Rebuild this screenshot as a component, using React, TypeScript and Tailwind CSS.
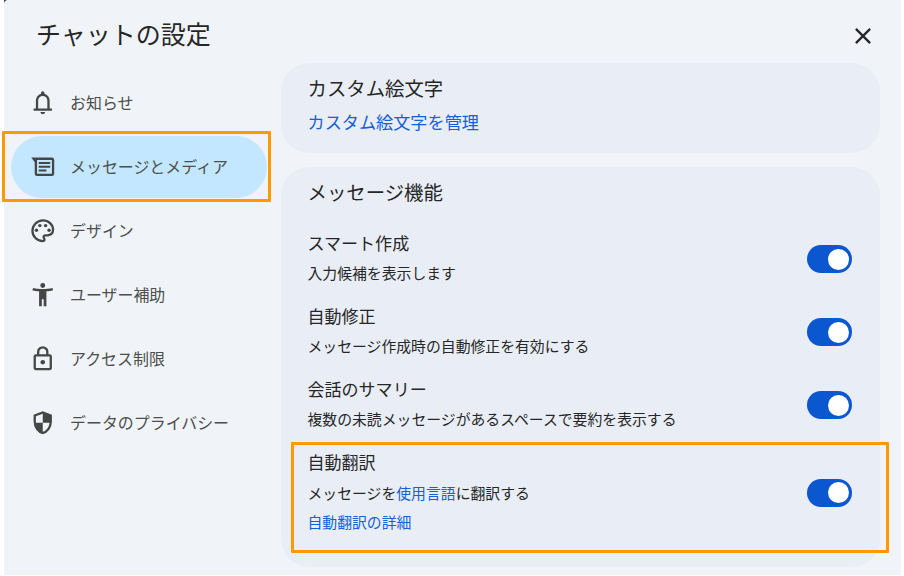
import type { ReactNode } from 'react';

const icons: Record<string, ReactNode> = {
  bell: (
    <path d="M4 19v-2h2v-7q0-2.075 1.25-3.687T10.5 4.2v-.7q0-.625.438-1.062T12 2t1.063.438T13.5 3.5v.7q2 .5 3.25 2.113T18 10v7h2v2H4Zm8 3q-.825 0-1.413-.588T10 20h4q0 .825-.588 1.413T12 22Zm-4-5h8v-7q0-1.65-1.175-2.825T12 6 9.175 7.175 8 10v7Z" />
  ),
  message: (
    <path
      fillRule="evenodd"
      d="M2 4h18a2 2 0 0 1 2 2v12a2 2 0 0 1-2 2H7a2 2 0 0 1-2-2V8L2 4Zm5 2v12h13V6H7Zm1.5 1.8h10v1.7h-10V7.8Zm0 3.3h10v1.7h-10v-1.7Zm0 3.3h6.7v1.7H8.500v-1.7Z"
    />
  ),
  palette: (
    <>
      <path d="M12 22q-2.050 0-3.875-.788t-3.187-2.150-2.150-3.187T2 12q0-2.075.813-3.900t2.200-3.175T8.250 2.788 12.200 2q2 0 3.775.688t3.113 1.900 2.125 2.875T22 11.050q0 2.875-1.750 4.413T16 17h-1.850q-.225 0-.312.125t-.088.275q0 .3.375.863t.375 1.287q0 1.250-.687 1.850T12 22Zm0-2q.15 0 .325-.125T12.500 19.550q0-.35-.375-.825T11.750 17.300q0-1.050.725-1.675T14.250 15H16q1.650 0 2.825-.962T20 11.050q0-3.025-2.312-5.037T12.200 4Q8.800 4 6.400 6.325T4 12q0 3.325 2.338 5.663T12 20Z" />
      <circle cx="6.5" cy="11.500" r="1.5" />
      <circle cx="9.5" cy="7.500" r="1.5" />
      <circle cx="14.5" cy="7.500" r="1.5" />
      <circle cx="17.5" cy="11.500" r="1.5" />
    </>
  ),
  person: (
    <path d="M12 6.100a2.150 2.150 0 1 0 0-4.300 2.150 2.150 0 0 0 0 4.300ZM8.800 22V9q-1.450-.125-3-.375T3 8l.5-2q1.950.525 4.150.763T12 7t4.350-.237T20.500 6l.5 2q-1.350.375-2.900.625T15.200 9v13h-2.400v-6h-1.600v6H8.800Z" />
  ),
  lock: (
    <path d="M6 22q-.825 0-1.412-.587T4 20V10q0-.825.588-1.412T6 8h1V6q0-2.075 1.463-3.537T12 1t3.538 1.463T17 6v2h1q.825 0 1.413.588T20 10v10q0 .825-.587 1.413T18 22H6Zm0-2h12V10H6v10Zm6-3q.825 0 1.413-.587T14 15t-.587-1.412T12 13t-1.412.588T10 15t.588 1.413T12 17ZM9 8h6V6q0-1.250-.875-2.125T12 3t-2.125.875T9 6v2Z" />
  ),
  shield: (
    <path d="M12 22q-3.475-.875-5.737-3.988T4 11.100V5l8-3 8 3v6.100q0 3.800-2.262 6.913T12 22Zm0-2.100q2.425-.75 4.050-2.963T17.950 12H12V4.125l-6 2.250v5.175q0 .175.05.45H12v7.900Z" />
  ),
};

const navItems = [
  { icon: 'bell', label: 'お知らせ' },
  { icon: 'message', label: 'メッセージとメディア', active: true },
  { icon: 'palette', label: 'デザイン' },
  { icon: 'person', label: 'ユーザー補助' },
  { icon: 'lock', label: 'アクセス制限' },
  { icon: 'shield', label: 'データのプライバシー' },
];

const features = [
  { title: 'スマート作成', description: '入力候補を表示します' },
  { title: '自動修正', description: 'メッセージ作成時の自動修正を有効にする' },
  { title: '会話のサマリー', description: '複数の未読メッセージがあるスペースで要約を表示する' },
];

function Toggle() {
  return (
    <button
      role="switch"
      aria-checked="true"
      className="flex h-7 w-[45px] shrink-0 items-center justify-end rounded-full bg-[#0b57d0] pr-[3px]"
    >
      <span className="size-[21px] rounded-full bg-white" />
    </button>
  );
}

function NavItem({ icon, label, active }: { icon: string; label: string; active?: boolean }) {
  return (
    <a
      className={`flex h-[62px] items-center gap-[13.500px] rounded-full pl-[18px] text-[15.950px] text-[#4b4e4d] ${
        active ? 'bg-[#c2e7ff]' : ''
      }`}
    >
      <svg viewBox="0 0 24 24" className="size-[27.5px] shrink-0 fill-[#444746]">
        {icons[icon]}
      </svg>
      <span className="whitespace-nowrap">{label}</span>
    </a>
  );
}

function FeatureRow({ title, children }: { title: string; children: ReactNode }) {
  return (
    <div className="flex items-center justify-between">
      <div className="whitespace-nowrap">
        <h3 className="text-[17.050px] leading-[30px]">{title}</h3>
        {children}
      </div>
      <div className="pt-0.5">
        <Toggle />
      </div>
    </div>
  );
}

export default function App() {
  return (
    <div className="relative h-[576px] w-[904px] overflow-hidden bg-white pb-px pl-1 font-['Noto_Sans_CJK_JP',sans-serif] text-[#262626]">
      <div className="h-[575px] w-[897px] bg-[#f0f4f9]">
        <header className="flex h-[63px] items-center justify-between pt-0.5 pr-[27px] pl-8">
          <h1 className="text-[25px] leading-8">チャットの設定</h1>
          <button aria-label="閉じる" className="pt-[7px]">
            <svg viewBox="0 0 22 22" className="size-[22px] fill-none stroke-current stroke-[2.300]">
              <path d="M3.900 3.900 18.100 18.100M18.100 3.900 3.900 18.100" />
            </svg>
          </button>
        </header>
        <div className="flex">
          <nav className="flex w-[263px] flex-col gap-0.5 pt-[9px] pl-[7px]">
            {navItems.map((item) => (
              <NavItem key={item.icon} {...item} />
            ))}
          </nav>
          <main className="ml-[13.500px] flex w-[599px] flex-col gap-3.5">
            <section className="h-[90px] rounded-[28px] bg-[#e9eef6] px-[27px] pt-[11px]">
              <h2 className="text-[19.4px] leading-7">カスタム絵文字</h2>
              <a className="mt-1.5 block text-[17.150px] leading-7 text-[#1460d6]">カスタム絵文字を管理</a>
            </section>
            <section className="h-[400px] rounded-[28px] bg-[#e9eef6] pt-[11px] pr-7 pl-[27px]">
              <h2 className="mb-[22px] text-[19.4px] leading-7">メッセージ機能</h2>
              <div className="flex flex-col gap-[13px]">
                {features.map((feature) => (
                  <FeatureRow key={feature.title} title={feature.title}>
                    <p className="text-[14.850px] leading-[30px]">{feature.description}</p>
                  </FeatureRow>
                ))}
                <FeatureRow title="自動翻訳">
                  <p className="text-[14.850px] leading-[31px]">
                    メッセージを<a className="text-[#1460d6]">使用言語</a>に翻訳する
                  </p>
                  <a className="block text-[14.850px] leading-7 text-[#1460d6]">自動翻訳の詳細</a>
                </FeatureRow>
              </div>
            </section>
          </main>
        </div>
      </div>
      <svg viewBox="0 0 4 4" className="absolute top-0 left-1 size-1 fill-[#333]">
        <path d="M0 0h3Q.5 .5 0 3Z" />
      </svg>
      <div className="absolute top-[131px] left-[2px] h-[71px] w-[269px] rounded-[1px] border-3 border-[#ff9900]" />
      <div className="absolute top-[442px] left-[291px] h-[111px] w-[598px] rounded-[1px] border-3 border-[#ff9900]" />
    </div>
  );
}
